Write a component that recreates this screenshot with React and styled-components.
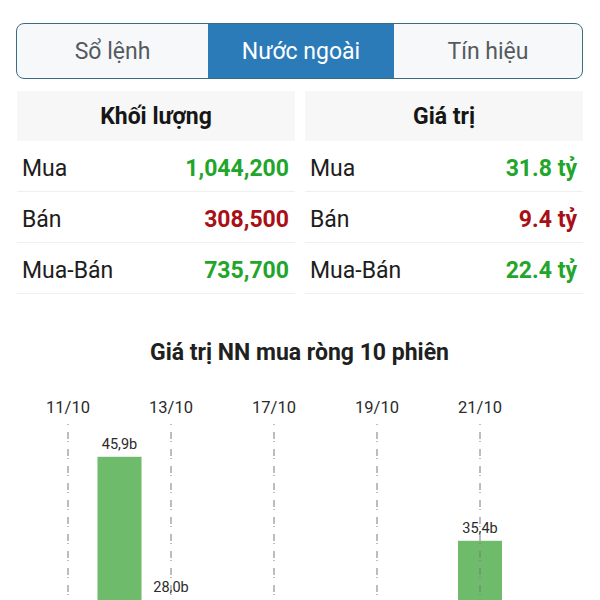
import { useState } from "react";
import styled, { createGlobalStyle } from "styled-components";

const GlobalStyle = createGlobalStyle`
  body {
    margin: 0;
    background: #ffffff;
    font-family: Roboto, "Liberation Sans", sans-serif;
    color: #1b1b1b;
  }
`;

const Page = styled.div`
  padding: 23px 17px 0 16px;
`;

const Tabs = styled.div`
  display: grid;
  grid-template-columns: 191px 186px 1fr;
  height: 56px;
  border: 1.5px solid #3b6c84;
  border-radius: 8px;
  overflow: hidden;
  box-sizing: border-box;
  background: #f6f8fa;
`;

const Tab = styled.button`
  border: none;
  margin: 0;
  padding: 0;
  font-family: inherit;
  font-size: 23px;
  background: ${({ $active }) => ($active ? "#2b7bb8" : "transparent")};
  color: ${({ $active }) => ($active ? "#ffffff" : "#555a5e")};
  cursor: pointer;
`;

const Panels = styled.div`
  display: grid;
  grid-template-columns: 1fr 1fr;
  column-gap: 10px;
  margin: 12px 0 0 1px;
`;

const Table = styled.div`
  display: flex;
  flex-direction: column;
`;

const Head = styled.div`
  height: 50px;
  display: flex;
  align-items: center;
  justify-content: center;
  background: #f7f7f7;
  font-size: 23px;
  font-weight: 700;
  color: #161616;
`;

const Row = styled.div`
  height: 51px;
  box-sizing: border-box;
  display: flex;
  align-items: center;
  justify-content: space-between;
  padding: 5px 6px 0 5px;
  border-bottom: 1px solid #efefef;
  font-size: 23px;
`;

const Label = styled.span`
  color: #1d1d1d;
`;

const Value = styled.span`
  font-weight: 700;
  color: ${({ $tone }) => ($tone === "down" ? "#a90f16" : "#22a52b")};
`;

const ChartTitle = styled.h3`
  margin: 45px 0 0;
  text-align: center;
  font-size: 23px;
  font-weight: 700;
  color: #202020;
`;

const ChartBox = styled.div`
  margin: 0 -17px 0 -16px;
`;

const tabs = ["Sổ lệnh", "Nước ngoài", "Tín hiệu"];

const volume = [
  { label: "Mua", value: "1,044,200", tone: "up" },
  { label: "Bán", value: "308,500", tone: "down" },
  { label: "Mua-Bán", value: "735,700", tone: "up" },
];

const amount = [
  { label: "Mua", value: "31.8 tỷ", tone: "up" },
  { label: "Bán", value: "9.4 tỷ", tone: "down" },
  { label: "Mua-Bán", value: "22.4 tỷ", tone: "up" },
];

const sessions = [
  { date: "11/10", value: null },
  { date: "12/10", value: 45.9 },
  { date: "13/10", value: 28.0 },
  { date: "14/10", value: null },
  { date: "17/10", value: null },
  { date: "18/10", value: null },
  { date: "19/10", value: null },
  { date: "20/10", value: null },
  { date: "21/10", value: 35.4 },
  { date: "24/10", value: null },
];

const StatTable = ({ title, rows }) => (
  <Table>
    <Head>{title}</Head>
    {rows.map((r) => (
      <Row key={r.label}>
        <Label>{r.label}</Label>
        <Value $tone={r.tone}>{r.value}</Value>
      </Row>
    ))}
  </Table>
);

// 8px per tỷ, baseline sits below the fold like the app screen
const NetChart = () => {
  const baseY = 458;
  const scale = 8;
  const x = (i) => 68 + i * 51.5;
  return (
    <svg width="600" height="470" viewBox="0 0 600 470">
      {sessions.map((s, i) =>
        i % 2 === 0 ? (
          <text
            key={"d" + i}
            x={x(i)}
            y={47}
            textAnchor="middle"
            fontSize="16.5"
            fontFamily="Roboto, sans-serif"
            fill="#2b2b2b"
          >
            {s.date}
          </text>
        ) : null
      )}
      {sessions.map((s, i) =>
        s.value ? (
          <g key={"b" + i}>
            <rect
              x={x(i) - 22}
              y={baseY - s.value * scale}
              width="44"
              height={s.value * scale}
              fill="#6dbb6b"
            />
            <text
              x={x(i)}
              y={baseY - s.value * scale - 8}
              textAnchor="middle"
              fontSize="14.5"
              fontFamily="Roboto, sans-serif"
              fill="#2b2b2b"
            >
              {s.value.toFixed(1).replace(".", ",")}b
            </text>
          </g>
        ) : null
      )}
      {sessions.map((s, i) =>
        i % 2 === 0 ? (
          <line
            key={"l" + i}
            x1={x(i)}
            x2={x(i)}
            y1={58}
            y2={470}
            stroke="#7a7a7a"
            strokeWidth="1"
            strokeDasharray="1 7 7 2"
          />
        ) : null
      )}
    </svg>
  );
};

export default function App() {
  const [active, setActive] = useState(1);
  return (
    <Page>
      <GlobalStyle />
      <Tabs>
        {tabs.map((t, i) => (
          <Tab key={t} $active={i === active} onClick={() => setActive(i)}>
            {t}
          </Tab>
        ))}
      </Tabs>
      <Panels>
        <StatTable title="Khối lượng" rows={volume} />
        <StatTable title="Giá trị" rows={amount} />
      </Panels>
      <ChartTitle>Giá trị NN mua ròng 10 phiên</ChartTitle>
      <ChartBox>
        <NetChart />
      </ChartBox>
    </Page>
  );
}
